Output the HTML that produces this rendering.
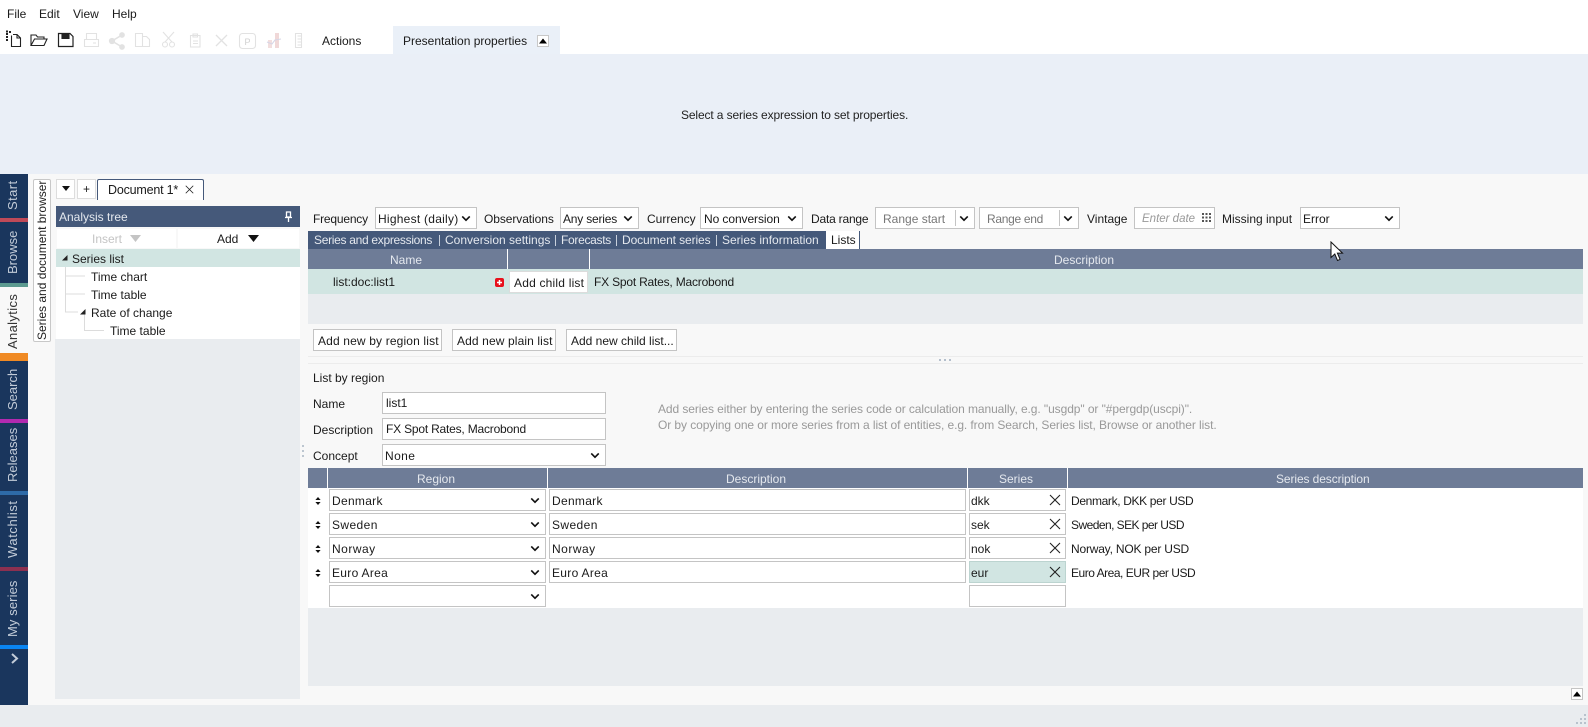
<!DOCTYPE html>
<html><head><meta charset="utf-8"><title>Macrobond</title>
<style>
html,body{margin:0;padding:0;width:1588px;height:727px;overflow:hidden;background:#f8f8f8}
body{position:relative;font:12px/16px "Liberation Sans",sans-serif;color:#1a1a1a}
div,span,svg{position:absolute;box-sizing:border-box}
.t{white-space:nowrap}
.b{background:#fff;border:1px solid #c4c4c4;white-space:nowrap;line-height:21px;padding-left:3px}
.s{line-height:22px;padding-left:2px}
.w{color:#e4e8ee}
.v{transform-origin:0 0;transform:rotate(-90deg);white-space:nowrap;color:#c3ccd8;font-size:13px}
.ch{right:5px;top:7px}
</style></head><body>
<svg width="0" height="0" style="position:absolute"><defs>
<symbol id="c" viewBox="0 0 12 8"><path d="M1.5 1.5L6 6l4.5-4.5" fill="none" stroke="#111" stroke-width="2"/></symbol>
<symbol id="x" viewBox="0 0 12 12"><path d="M1 1l10 10M11 1L1 11" fill="none" stroke="#222" stroke-width="1.1"/></symbol>
<symbol id="o" viewBox="0 0 6 8"><path d="M3 0l2.600 3H.4zM3 8L.4 5h5.200z" fill="#111"/></symbol>
</defs></svg>

<!-- Top -->
<div style="left:0;top:0;width:1588px;height:54px;background:#fff"></div>
<div class="t" style="left:7px;top:6px">File</div>
<div class="t" style="left:39px;top:6px">Edit</div>
<div class="t" style="left:73px;top:6px">View</div>
<div class="t" style="left:112px;top:6px">Help</div>

<svg style="left:0;top:26px" width="310" height="28" fill="none" stroke-width="1.1">
<g stroke="#222">
<path d="M11.500 9.500V20.500H20.500V12L17 8.500H13" />
<path d="M17 8.500V12H20.500"/>
<path d="M6 8h2M6 11h2M6 14h2M9 6h2M6 5.500h2" stroke-width="2" stroke-dasharray="2 1"/>
<path d="M31 19.500V9h5l1.500 2H44v2M31 19.500l3.500-6.500H47l-3 6.500z"/>
<path d="M58.500 7.500H70l3 3V20.500H58.500z" stroke-width="1.200"/>
<path d="M62 7.500h7v5h-7z" fill="#222"/>
</g>
<g stroke="#e2e2e2">
<path d="M86.500 7.500h10v6h-10zM84.500 13.500h14v7h-14zM93 17h3"/>
<path d="M122 9l-10 6 10 6" stroke-width="1.600"/>
<circle cx="122" cy="9" r="2.300" fill="#e2e2e2"/><circle cx="112" cy="15" r="2.600" fill="#e2e2e2"/><circle cx="122" cy="21" r="2.300" fill="#e2e2e2"/>
<path d="M135.500 7.500h7v13h-7zM142.500 10.500h4l3 3v7h-7"/>
<path d="M163 6l9 10M174 6l-9 10"/><circle cx="165" cy="18.500" r="2.500"/><circle cx="172" cy="18.500" r="2.500"/>
<path d="M190.500 9.500h9.500v11.500h-9.500zM193 8h4.500v3H193zM193 15h5M193 17.500h5"/>
<path d="M216 9l11 11M227 9L216 20" stroke-width="1.300"/>
<rect x="239.500" y="7.500" width="16" height="15" rx="3"/>
<path d="M295.500 7.500h6v14h-6zM297.500 10h4M297.500 13h4M297.500 16h4M297.500 19h4"/>
</g>
<text x="244.500" y="19" font-family="Liberation Sans" font-size="9" fill="#d0d0d0" stroke="none">P</text>
<g stroke="none"><path d="M268 14h4v8h-4z" fill="#f2dede"/><path d="M275 7h4v15h-4z" fill="#f0d8d8"/><path d="M267 16l5 2 3-4 6-1" stroke="#d6d6e6" fill="none"/></g>
</svg>
<div class="t" style="left:322px;top:33px">Actions</div>
<div style="left:393px;top:26px;width:167px;height:28px;background:#eaf0f8"></div>
<div class="t" style="left:403px;top:33px">Presentation properties</div>
<div style="left:537px;top:35px;width:12px;height:12px;background:#fff;border:1px solid #c8c8c8"><svg style="left:1px;top:2px" width="8" height="6"><path d="M4 0.500L8 5.500H0z" fill="#000"/></svg></div>
<div style="left:0;top:54px;width:1588px;height:120px;background:#eaeff7"></div>
<div class="t" style="left:681px;top:107px;color:#222;letter-spacing:-.125px">Select a series expression to set properties.</div>

<!-- Sidebar -->
<div style="left:0;top:174px;width:28px;height:531px;background:#1a365d"></div>
<div style="left:0;top:218px;width:28px;height:4px;background:#c04a58"></div>
<div style="left:0;top:283px;width:28px;height:4px;background:#5c9a90"></div>
<div style="left:0;top:287px;width:28px;height:66px;background:#f8f8f8"></div>
<div style="left:0;top:353px;width:28px;height:8px;background:#f08a24"></div>
<div style="left:0;top:419px;width:28px;height:4px;background:#b32ab0"></div>
<div style="left:0;top:491px;width:28px;height:4px;background:#2e6ba8"></div>
<div style="left:0;top:567px;width:28px;height:4px;background:#8c3050"></div>
<div style="left:0;top:645px;width:28px;height:4px;background:#0a84f0"></div>
<div class="v" style="left:5px;top:210px;letter-spacing:.4px">Start</div>
<div class="v" style="left:5px;top:274px">Browse</div>
<div class="v" style="left:5px;top:349px;color:#333;letter-spacing:.35px">Analytics</div>
<div class="v" style="left:5px;top:410px">Search</div>
<div class="v" style="left:5px;top:482px">Releases</div>
<div class="v" style="left:5px;top:558px;letter-spacing:.6px">Watchlist</div>
<div class="v" style="left:5px;top:637px;letter-spacing:.1px">My series</div>
<svg style="left:11px;top:653px" width="8" height="11"><path d="M1 1l5 4.500-5 4.500" fill="none" stroke="#c3ccd8" stroke-width="2"/></svg>

<!-- Left panel -->
<div style="left:33px;top:179px;width:18px;height:163px;background:#fff;border:1px solid #c8c8c8;border-radius:2px"></div>
<div class="v" style="left:34px;top:340px;color:#222;font-size:12px">Series and document browser</div>
<div style="left:56px;top:179px;width:19px;height:20px;background:#fff;border:1px solid #ddd"><svg style="left:5px;top:6px" width="8" height="5"><path d="M0 0h8L4 5z" fill="#111"/></svg></div>
<div style="left:77px;top:179px;width:19px;height:20px;background:#fff;border:1px solid #ddd;text-align:center;line-height:18px">+</div>
<div class="t" style="left:97px;top:179px;width:107px;height:21px;background:#fff;border:1px solid #45597a;border-bottom:0;border-radius:2px 2px 0 0;padding:1px 0 0 10px;line-height:18px;font-size:12.500px;letter-spacing:-.2px">Document 1*</div>
<svg style="left:185px;top:185px" width="9" height="9"><use href="#x" width="9" height="9"/></svg>
<div style="left:56px;top:206px;width:244px;height:21px;background:#45597a"></div>
<div class="t w" style="left:59px;top:209px">Analysis tree</div>
<svg style="left:284px;top:211px" width="9" height="11" fill="none" stroke="#fff" stroke-width="1.300"><path d="M2.500 1h4v5h-4zM1 6.500h7M4.500 7v4"/></svg>
<div style="left:57px;top:229px;width:119px;height:19px;background:#fff;text-align:center"></div>
<div class="t" style="left:92px;top:231px;color:#c4c4c4">Insert</div>
<svg style="left:130px;top:235px" width="11" height="7"><path d="M0 0h11L5.500 7z" fill="#c4c4c4"/></svg>
<div style="left:177.500px;top:229px;width:121px;height:19px;background:#fff"></div>
<div class="t" style="left:217px;top:231px">Add</div>
<svg style="left:248px;top:235px" width="11" height="7"><path d="M0 0h11L5.500 7z" fill="#111"/></svg>
<div style="left:56px;top:249px;width:244px;height:90px;background:#fff"></div>
<div style="left:56px;top:249px;width:244px;height:18px;background:#d1e5e2"></div>
<div style="left:55px;top:339px;width:245px;height:360px;background:#e9ecef"></div>
<svg style="left:56px;top:249px" width="80" height="90" fill="none" stroke="#dcdcdc">
<path d="M9.500 18V45M9.500 27H29M9.500 45H29M9.500 45V63H22M28.500 63V81.500H48"/>
<path d="M6 11.500L11.500 6V11.500z" fill="#222" stroke="none"/>
<path d="M24 65.500L29.500 60V65.500z" fill="#222" stroke="none"/>
</svg>
<div class="t" style="left:72px;top:251px">Series list</div>
<div class="t" style="left:91px;top:269px">Time chart</div>
<div class="t" style="left:91px;top:287px">Time table</div>
<div class="t" style="left:91px;top:305px">Rate of change</div>
<div class="t" style="left:110px;top:323px">Time table</div>
<svg style="left:301px;top:445px" width="4" height="14"><path d="M1 0h2v2H1zM1 5h2v2H1zM1 10h2v2H1z" fill="#bcc6d0"/></svg>

<!-- Filter row -->
<div class="t" style="left:313px;top:211px;letter-spacing:-.2px">Frequency</div>
<div class="b s" style="left:375px;top:207px;width:102px;height:22px;letter-spacing:.25px">Highest (daily)<svg class="ch" width="10" height="7"><use href="#c"/></svg></div>
<div class="t" style="left:484px;top:211px;letter-spacing:-.08px">Observations</div>
<div class="b s" style="left:560px;top:207px;width:79px;height:22px;letter-spacing:-.2px">Any series<svg class="ch" width="10" height="7"><use href="#c"/></svg></div>
<div class="t" style="left:647px;top:211px">Currency</div>
<div class="b s" style="left:700px;top:207px;width:103px;height:22px;letter-spacing:-.08px;padding-left:3px">No conversion<svg class="ch" width="10" height="7"><use href="#c"/></svg></div>
<div class="t" style="left:811px;top:211px;letter-spacing:-.2px">Data range</div>
<div class="b s" style="left:875px;top:207px;width:100px;height:22px;padding-left:7px;color:#777">Range start<div style="left:79px;top:2px;width:1px;height:16px;background:#c4c4c4"></div><svg class="ch" width="10" height="7"><use href="#c"/></svg></div>
<div class="b s" style="left:979px;top:207px;width:100px;height:22px;padding-left:7px;color:#777;letter-spacing:-.3px">Range end<div style="left:79px;top:2px;width:1px;height:16px;background:#c4c4c4"></div><svg class="ch" width="10" height="7"><use href="#c"/></svg></div>
<div class="t" style="left:1087px;top:211px">Vintage</div>
<div class="b s" style="left:1134px;top:207px;width:81px;height:22px;padding-left:7px;color:#999;font-style:italic;font-size:11.500px">Enter date<svg style="left:67px;top:5px" width="9" height="9"><path d="M0 0h2v2H0zM3.500 0h2v2h-2zM7 0h2v2H7zM0 3.500h2v2H0zM3.500 3.500h2v2h-2zM7 3.500h2v2H7zM0 7h2v2H0zM3.500 7h2v2h-2zM7 7h2v2H7z" fill="#555"/></svg></div>
<div class="t" style="left:1222px;top:211px">Missing input</div>
<div class="b s" style="left:1300px;top:207px;width:100px;height:22px">Error<svg class="ch" width="10" height="7"><use href="#c"/></svg></div>

<!-- Tabs -->
<div style="left:308px;top:231px;width:552px;height:18px;background:#45597a"></div>
<div class="t w" style="left:314px;top:232px;letter-spacing:-.3px">Series and expressions</div>
<div style="left:439px;top:235px;width:1px;height:11px;background:#c8d0dc"></div>
<div class="t w" style="left:445px;top:232px">Conversion settings</div>
<div style="left:555px;top:235px;width:1px;height:11px;background:#c8d0dc"></div>
<div class="t w" style="left:561px;top:232px;letter-spacing:-.3px">Forecasts</div>
<div style="left:616px;top:235px;width:1px;height:11px;background:#c8d0dc"></div>
<div class="t w" style="left:622px;top:232px;letter-spacing:-.1px">Document series</div>
<div style="left:716px;top:235px;width:1px;height:11px;background:#c8d0dc"></div>
<div class="t w" style="left:722px;top:232px">Series information</div>
<div style="left:826px;top:231px;width:33px;height:18px;background:#fff"></div>
<div class="t" style="left:831px;top:232px">Lists</div>

<!-- Lists grid -->
<div style="left:308px;top:249px;width:1275px;height:20px;background:#6e7c97"></div>
<div style="left:507px;top:249px;width:1px;height:20px;background:#fff"></div>
<div style="left:589px;top:249px;width:1px;height:20px;background:#fff"></div>
<div class="t w" style="left:390px;top:252px">Name</div>
<div class="t w" style="left:1054px;top:252px">Description</div>
<div style="left:308px;top:269px;width:1275px;height:25px;background:#d1e5e2"></div>
<div class="t" style="left:333px;top:274px">list:doc:list1</div>
<div style="left:495px;top:278px;width:9px;height:9px;background:#e8101c;border-radius:2px"></div>
<svg style="left:495px;top:278px" width="9" height="9"><path d="M2 4.500h5M4.500 2v5" stroke="#fff" stroke-width="1.500"/></svg>
<div class="t" style="left:509px;top:271px;width:79px;height:22px;background:#fff;border:1px solid #dcdcdc;line-height:22px;padding-left:4px;letter-spacing:.2px">Add child list</div>
<div class="t" style="left:594px;top:274px;letter-spacing:-.2px">FX Spot Rates, Macrobond</div>
<div style="left:308px;top:294px;width:1275px;height:30px;background:#e9ecef"></div>
<div class="b" style="left:313px;top:329px;width:129px;height:22px;padding-left:4px;line-height:23px;letter-spacing:.15px">Add new by region list</div>
<div class="b" style="left:452px;top:329px;width:104px;height:22px;padding-left:4px;line-height:23px;letter-spacing:.12px">Add new plain list</div>
<div class="b" style="left:566px;top:329px;width:111px;height:22px;padding-left:4px;line-height:23px">Add new child list...</div>
<div style="left:308px;top:356px;width:1275px;height:1px;background:#ececec"></div>
<div style="left:308px;top:363px;width:1275px;height:1px;background:#ececec"></div>
<svg style="left:939px;top:358px" width="14" height="4"><path d="M0 1h2v2H0zM5 1h2v2H5zM10 1h2v2h-2z" fill="#b4bfcc"/></svg>

<!-- Form -->
<div class="t" style="left:313px;top:370px">List by region</div>
<div class="t" style="left:313px;top:396px">Name</div>
<div class="b" style="left:382px;top:392px;width:224px;height:22px;line-height:20px">list1</div>
<div class="t" style="left:313px;top:422px">Description</div>
<div class="b" style="left:382px;top:418px;width:224px;height:22px;line-height:20px;letter-spacing:-.2px">FX Spot Rates, Macrobond</div>
<div class="t" style="left:313px;top:448px">Concept</div>
<div class="b s" style="left:382px;top:444px;width:224px;height:22px;letter-spacing:.4px">None<svg class="ch" width="10" height="7"><use href="#c"/></svg></div>
<div class="t" style="left:658px;top:401px;color:#999;letter-spacing:-.08px">Add series either by entering the series code or calculation manually, e.g. "usgdp" or "#pergdp(uscpi)".</div>
<div class="t" style="left:658px;top:417px;color:#999;letter-spacing:-.08px">Or by copying one or more series from a list of entities, e.g. from Search, Series list, Browse or another list.</div>

<!-- Region table -->
<div style="left:308px;top:468px;width:1275px;height:20px;background:#6e7c97"></div>
<div style="left:327px;top:468px;width:1px;height:20px;background:#fff"></div>
<div style="left:547px;top:468px;width:1px;height:20px;background:#fff"></div>
<div style="left:967px;top:468px;width:1px;height:20px;background:#fff"></div>
<div style="left:1067px;top:468px;width:1px;height:20px;background:#fff"></div>
<div class="t w" style="left:417px;top:471px">Region</div>
<div class="t w" style="left:726px;top:471px">Description</div>
<div class="t w" style="left:999px;top:471px">Series</div>
<div class="t w" style="left:1276px;top:471px;letter-spacing:-.1px">Series description</div>
<div style="left:308px;top:488px;width:1275px;height:120px;background:#fff"></div>

<svg style="left:315px;top:497px" width="6" height="8"><use href="#o" width="6" height="8"/></svg>
<div class="b s" style="left:329px;top:489px;width:217px;height:22px;letter-spacing:.3px">Denmark<svg class="ch" width="10" height="7"><use href="#c"/></svg></div>
<div class="b s" style="left:549px;top:489px;width:417px;height:22px;letter-spacing:.3px">Denmark</div>
<div class="b s" style="left:969px;top:489px;width:97px;height:22px;padding-left:1px">dkk<svg style="left:79px;top:4px" width="12" height="12"><use href="#x"/></svg></div>
<div class="t" style="left:1071px;top:493px;letter-spacing:-.35px">Denmark, DKK per USD</div>

<svg style="left:315px;top:521px" width="6" height="8"><use href="#o" width="6" height="8"/></svg>
<div class="b s" style="left:329px;top:513px;width:217px;height:22px;letter-spacing:.4px">Sweden<svg class="ch" width="10" height="7"><use href="#c"/></svg></div>
<div class="b s" style="left:549px;top:513px;width:417px;height:22px;letter-spacing:.4px">Sweden</div>
<div class="b s" style="left:969px;top:513px;width:97px;height:22px;padding-left:1px">sek<svg style="left:79px;top:4px" width="12" height="12"><use href="#x"/></svg></div>
<div class="t" style="left:1071px;top:517px;letter-spacing:-.55px">Sweden, SEK per USD</div>

<svg style="left:315px;top:545px" width="6" height="8"><use href="#o" width="6" height="8"/></svg>
<div class="b s" style="left:329px;top:537px;width:217px;height:22px;letter-spacing:.5px">Norway<svg class="ch" width="10" height="7"><use href="#c"/></svg></div>
<div class="b s" style="left:549px;top:537px;width:417px;height:22px;letter-spacing:.5px">Norway</div>
<div class="b s" style="left:969px;top:537px;width:97px;height:22px;padding-left:1px">nok<svg style="left:79px;top:4px" width="12" height="12"><use href="#x"/></svg></div>
<div class="t" style="left:1071px;top:541px;letter-spacing:-.2px">Norway, NOK per USD</div>

<svg style="left:315px;top:569px" width="6" height="8"><use href="#o" width="6" height="8"/></svg>
<div class="b s" style="left:329px;top:561px;width:217px;height:22px;letter-spacing:.3px">Euro Area<svg class="ch" width="10" height="7"><use href="#c"/></svg></div>
<div class="b s" style="left:549px;top:561px;width:417px;height:22px;letter-spacing:.3px">Euro Area</div>
<div class="b s" style="left:969px;top:561px;width:97px;height:22px;padding-left:1px;background:#d1e5e2;border-color:#bcd4d0">eur<svg style="left:79px;top:4px" width="12" height="12"><use href="#x"/></svg></div>
<div class="t" style="left:1071px;top:565px;letter-spacing:-.48px">Euro Area, EUR per USD</div>

<div class="b" style="left:329px;top:585px;width:217px;height:22px"><svg class="ch" width="10" height="7"><use href="#c"/></svg></div>
<div class="b" style="left:969px;top:585px;width:97px;height:22px"></div>
<div style="left:308px;top:608px;width:1275px;height:78px;background:#e9ecef"></div>
<div style="left:1571px;top:688px;width:12px;height:12px;background:#fff;border:1px solid #c4c4c4"><svg style="left:1px;top:2px" width="8" height="6"><path d="M4 0.500L8 5.500H0z" fill="#000"/></svg></div>

<!-- Status -->
<div style="left:0;top:705px;width:1588px;height:22px;background:#e9ecef"></div>
<svg style="left:1575px;top:714px" width="12" height="12"><path d="M9 0h2v2H9zM5 4h2v2H5zM9 4h2v2H9zM1 8h2v2H1zM5 8h2v2H5zM9 8h2v2H9z" fill="#b8c2cc"/></svg>

<!-- Cursor -->
<svg style="left:1330px;top:241px" width="14" height="21"><path d="M1 1v15.500l3.800-3.500 2.700 6.500 2.600-1.100-2.700-6.300H12.500z" fill="#fff" stroke="#111" stroke-width="1"/></svg>
</body></html>
